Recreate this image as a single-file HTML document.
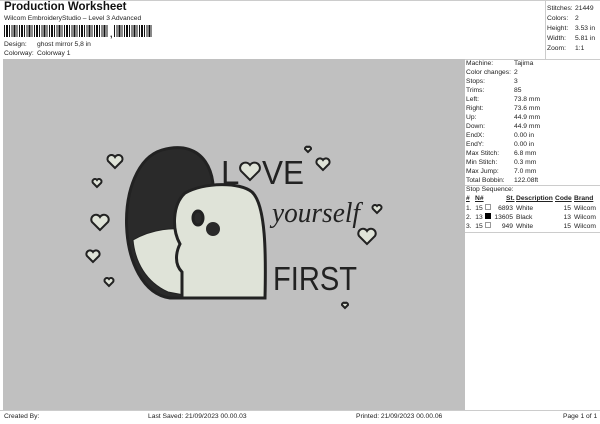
<!DOCTYPE html>
<html><head><style>
*{margin:0;padding:0;box-sizing:border-box}
body{width:600px;height:424px;background:#fff;font-family:"Liberation Sans",Arial,sans-serif;color:#222;position:relative;overflow:hidden;font-size:6.7px}
.a{position:absolute;white-space:nowrap}
</style></head><body>
<div class="a" style="left:4px;top:1px;font-size:11.5px;font-weight:bold;color:#111">Production Worksheet</div>
<div class="a" style="left:4px;top:15px;">Wilcom EmbroideryStudio – Level 3 Advanced</div>
<div class="a" style="left:4px;top:25px;width:148px;height:12px;background:repeating-linear-gradient(90deg,#111 0 1px,#fff 1px 2px,#111 2px 3px,#111 3px 4px,#fff 4px 5px,#111 5px 6px,#fff 6px 7.5px)"></div>
<div class="a" style="left:109px;top:25px;width:5px;height:13px;background:#fff"></div>
<div class="a" style="left:110px;top:29px;font-size:9px;font-weight:bold">,</div>
<div class="a" style="left:4px;top:41px">Design:</div><div class="a" style="left:37px;top:41px">ghost mirror 5,8 in</div>
<div class="a" style="left:4px;top:50px">Colorway:</div><div class="a" style="left:37px;top:50px">Colorway 1</div>
<div class="a" style="left:545px;top:0;width:1px;height:59px;background:#ccc"></div>
<div class="a" style="left:0;top:0;width:600px;height:1px;background:#ccc"></div>
<div class="a" style="left:547px;top:4px;line-height:10px">Stitches:<br>Colors:<br>Height:<br>Width:<br>Zoom:</div>
<div class="a" style="left:575px;top:4px;line-height:10px">21449<br>2<br>3.53 in<br>5.81 in<br>1:1</div>
<div class="a" style="left:3px;top:59px;width:462px;height:351px;background:#c0c0c0"></div>
<div class="a" style="left:465px;top:59px;width:135px;height:1px;background:#ccc"></div>
<div class="a" style="left:0;top:410px;width:600px;height:1px;background:#ccc"></div>
<div class="a" style="left:466px;top:59px;line-height:9px">Machine:<br>Color changes:<br>Stops:<br>Trims:<br>Left:<br>Right:<br>Up:<br>Down:<br>EndX:<br>EndY:<br>Max Stitch:<br>Min Stitch:<br>Max Jump:<br>Total Bobbin:</div>
<div class="a" style="left:514px;top:59px;line-height:9px">Tajima<br>2<br>3<br>85<br>73.8 mm<br>73.6 mm<br>44.9 mm<br>44.9 mm<br>0.00 in<br>0.00 in<br>6.8 mm<br>0.3 mm<br>7.0 mm<br>122.08ft</div>
<div class="a" style="left:465px;top:185px;width:135px;height:1px;background:#ccc"></div>
<div class="a" style="left:466px;top:186px">Stop Sequence:</div>
<div class="a" style="left:466px;top:195px;font-weight:bold;text-decoration:underline">#</div>
<div class="a" style="left:475px;top:195px;font-weight:bold;text-decoration:underline">N#</div>
<div class="a" style="left:506px;top:195px;font-weight:bold;text-decoration:underline">St.</div>
<div class="a" style="left:516px;top:195px;font-weight:bold;text-decoration:underline">Description</div>
<div class="a" style="left:555px;top:195px;font-weight:bold;text-decoration:underline">Code</div>
<div class="a" style="left:574px;top:195px;font-weight:bold;text-decoration:underline">Brand</div>
<div class="a" style="left:466px;top:204px;line-height:9px">1.&nbsp; 15<br>2.&nbsp; 13<br>3.&nbsp; 15</div>
<div class="a" style="left:485px;top:204px;width:6px;height:6px;border:1px solid #999;background:#fff"></div>
<div class="a" style="left:485px;top:213px;width:6px;height:6px;background:#000"></div>
<div class="a" style="left:485px;top:222px;width:6px;height:6px;border:1px solid #999;background:#fff"></div>
<div class="a" style="left:492px;top:204px;width:21px;text-align:right;line-height:9px">6893<br>13605<br>949</div>
<div class="a" style="left:516px;top:204px;line-height:9px">White<br>Black<br>White</div>
<div class="a" style="left:555px;top:204px;width:16px;text-align:right;line-height:9px">15<br>13<br>15</div>
<div class="a" style="left:574px;top:204px;line-height:9px">Wilcom<br>Wilcom<br>Wilcom</div>
<div class="a" style="left:465px;top:232px;width:135px;height:1px;background:#ccc"></div>
<svg class="a" style="left:0;top:0" width="600" height="424">
<g stroke="#222" stroke-width="3" fill="#dfe3d8">
<path d="M170 298 C115 290 112 165 162 150 C205 138 218 175 212 205 L205 298 Z" fill="#2a2a2a"/>
<path d="M133 240 C150 230 175 225 195 232 L200 298 L168 292 C146 282 135 262 133 240Z" fill="#dfe3d8" stroke-width="1"/>
<path d="M182 298 L182 272 C174 264 176 252 180 244 C172 230 172 205 185 193 C205 182 240 182 252 192 C266 205 266 255 265 298 Z"/>
<ellipse cx="198" cy="218" rx="5" ry="7" fill="#2a2a2a"/><circle cx="213" cy="229" r="8" fill="#2a2a2a" stroke="#dfe3d8" stroke-width="2"/>
</g>
<g fill="#dfe3d8" stroke="#222" stroke-width="2">
<path d="M115 168 l-7-7a4 4 0 0 1 7-4a4 4 0 0 1 7 4z"/>
<path d="M100 230 l-8-8a4.5 4.5 0 0 1 8-5a4.5 4.5 0 0 1 8 5z"/>
<path d="M93 262 l-6-6a3.5 3.5 0 0 1 6-4a3.5 3.5 0 0 1 6 4z"/>
<path d="M97 187 l-4-4a2.5 2.5 0 0 1 4-3a2.5 2.5 0 0 1 4 3z"/>
<path d="M109 286 l-4-4a2.5 2.5 0 0 1 4-3a2.5 2.5 0 0 1 4 3z"/>
<path d="M323 170 l-6-6a3.5 3.5 0 0 1 6-4a3.5 3.5 0 0 1 6 4z"/>
<path d="M308 152 l-3-3a2 2 0 0 1 3-2a2 2 0 0 1 3 2z"/>
<path d="M377 213 l-4-4a2.5 2.5 0 0 1 4-3a2.5 2.5 0 0 1 4 3z"/>
<path d="M367 244 l-8-8a4.5 4.5 0 0 1 8-5a4.5 4.5 0 0 1 8 5z"/>
<path d="M345 308 l-3-3a2 2 0 0 1 3-2a2 2 0 0 1 3 2z"/>
<path d="M250 180 l-9-9a5 5 0 0 1 9-6a5 5 0 0 1 9 6z"/>
</g>
<text x="221" y="184" font-family="Liberation Sans" font-size="33" fill="#222">L</text>
<text x="262" y="184" font-family="Liberation Sans" font-size="33" fill="#222" textLength="42" lengthAdjust="spacingAndGlyphs">VE</text>
<text x="272" y="222" font-family="Liberation Serif" font-style="italic" font-size="28" fill="#222" textLength="88" lengthAdjust="spacingAndGlyphs">yourself</text>
<text x="273" y="290" font-family="Liberation Sans" font-size="33" fill="#222" textLength="84" lengthAdjust="spacingAndGlyphs">FIRST</text>
</svg>
<div class="a" style="left:4px;top:413px">Created By:</div>
<div class="a" style="left:148px;top:413px">Last Saved: 21/09/2023 00.00.03</div>
<div class="a" style="left:356px;top:413px">Printed: 21/09/2023 00.00.06</div>
<div class="a" style="left:563px;top:413px">Page 1 of 1</div>
</body></html>
